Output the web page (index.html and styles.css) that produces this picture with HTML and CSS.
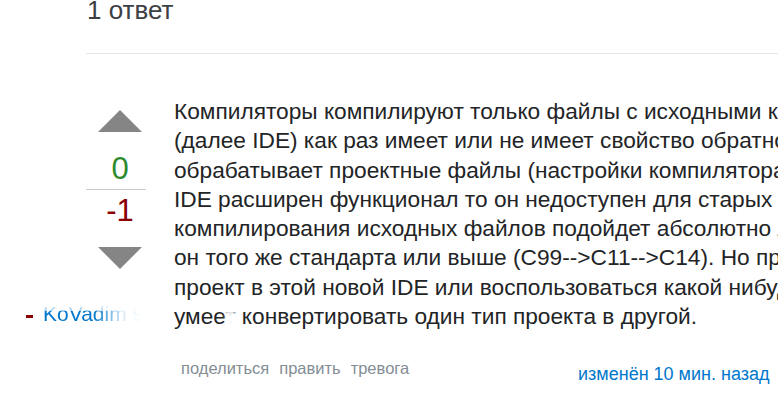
FILE: index.html
```html
<!DOCTYPE html>
<html lang="ru">
<head>
<meta charset="utf-8">
<title>1 ответ</title>
<link rel="stylesheet" href="styles.css">
</head>
<body>
<div class="page">
  <h2 class="answers-header">1 ответ</h2>
  <div class="answer">
    <div class="votecell">
      <span class="vote-up"></span>
      <span class="count count-up">0</span>
      <span class="count-sep"></span>
      <span class="count count-down">-1</span>
      <span class="vote-down"></span>
    </div>
    <div class="postcell">
      <p class="post-text">Компиляторы компилируют только файлы с исходными кодами. А вот среда разработки<br>(далее IDE) как раз имеет или не имеет свойство обратной совместимости, так как она<br>обрабатывает проектные файлы (настройки компилятора, пути, библиотеки). Если в новой<br>IDE расширен функционал то он недоступен для старых  версий. Для<br>компилирования исходных файлов подойдет абсолютно любой компилятор, если<br>он того же стандарта или выше (C99--&gt;C11--&gt;C14). Но придется либо заново создать<br>проект в этой новой IDE или воспользоваться какой нибудь утилитой, которая<br>умеет конвертировать один тип проекта в другой.</p>
      <div class="post-footer">
        <div class="post-menu">
          <a class="menu-link">поделиться</a>
          <a class="menu-link">править</a>
          <a class="menu-link">тревога</a>
        </div>
        <div class="signature">
          <a class="action-time">изменён 10 мин. назад</a>
        </div>
      </div>
    </div>
  </div>
</div>
<div class="comment-ghost"><span class="ghost-dash"></span><a class="ghost-user">KoVadim 9</a></div>
<div class="smudge"></div>
</body>
</html>
```

FILE: styles.css
```css
html, body {
  margin: 0;
  padding: 0;
  overflow: hidden;
  background: #ffffff;
}
body {
  width: 778px;
  height: 418px;
  position: relative;
  font-family: "Liberation Sans", Arial, sans-serif;
  color: #242729;
}
.page {
  padding-left: 86px;
  width: 1000px;
}
.answers-header {
  margin: 0;
  font-size: 26px;
  font-weight: normal;
  line-height: 20px;
  color: #3b4045;
  padding-bottom: 33px;
  border-bottom: 1px solid #e4e6e8;
  padding-left: 1px;
}
.answer {
  display: flex;
  padding-top: 43px;
}
.votecell {
  width: 68px;
  flex: none;
  display: flex;
  flex-direction: column;
  align-items: center;
  padding-top: 13px;
  padding-right: 20px;
}
.vote-up, .vote-down {
  width: 0;
  height: 0;
  border-left: 22px solid transparent;
  border-right: 22px solid transparent;
}
.vote-up {
  border-bottom: 22px solid #858585;
}
.vote-down {
  border-top: 22px solid #858585;
  margin-top: 19px;
}
.count {
  font-size: 31px;
  line-height: 34px;
}
.count-up {
  color: #2e8b2e;
  margin-top: 20px;
}
.count-sep {
  width: 60px;
  height: 1px;
  background: #c8ccd0;
  align-self: flex-start;
  margin-top: 3px;
  margin-bottom: 4px;
}
.count-down {
  color: #8b0000;
}
.postcell {
  width: 660px;
  flex: none;
}
.post-text {
  margin: 0;
  font-size: 22.7px;
  line-height: 29.25px;
  white-space: pre;
  color: #222426;
}
.post-footer {
  display: flex;
  margin-top: 27px;
}
.post-menu {
  flex: 1;
  display: flex;
  gap: 10px;
  padding-left: 7px;
  font-size: 16.5px;
  line-height: 20px;
}
.menu-link {
  color: #848d95;
}
.signature {
  width: 256px;
  padding-top: 6px;
  font-size: 18px;
  line-height: 20px;
}
.action-time {
  color: #0077cc;
}
.comment-ghost {
  position: absolute;
  left: 26px;
  top: 302px;
  display: flex;
  align-items: baseline;
  gap: 10px;
  font-size: 21px;
  line-height: 24px;
  white-space: nowrap;
  width: 125px;
  overflow: hidden;
}
.ghost-dash {
  flex: none;
  width: 7px;
  height: 3px;
  background: #8b0000;
  align-self: center;
  margin-top: 4px;
}
.ghost-user {
  color: #0077cc;
  -webkit-mask-image: linear-gradient(to right, #000 0, #000 50px, rgba(0,0,0,0.15) 80px, transparent 100px);
  mask-image: linear-gradient(to right, #000 0, #000 50px, rgba(0,0,0,0.15) 80px, transparent 100px);
}
.comment-ghost::after {
  content: "";
  position: absolute;
  left: 0;
  right: 0;
  top: 0;
  height: 9px;
  background: linear-gradient(to bottom, #fff 0, rgba(255,255,255,0.6) 100%);
}
.smudge {
  position: absolute;
  left: 226px;
  top: 298px;
  width: 10px;
  height: 44px;
  background: linear-gradient(to bottom, rgba(255,255,255,0.5), #fff 45%, rgba(255,255,255,0.8));
  filter: blur(1.5px);
  transform: rotate(-8deg);
}
```
